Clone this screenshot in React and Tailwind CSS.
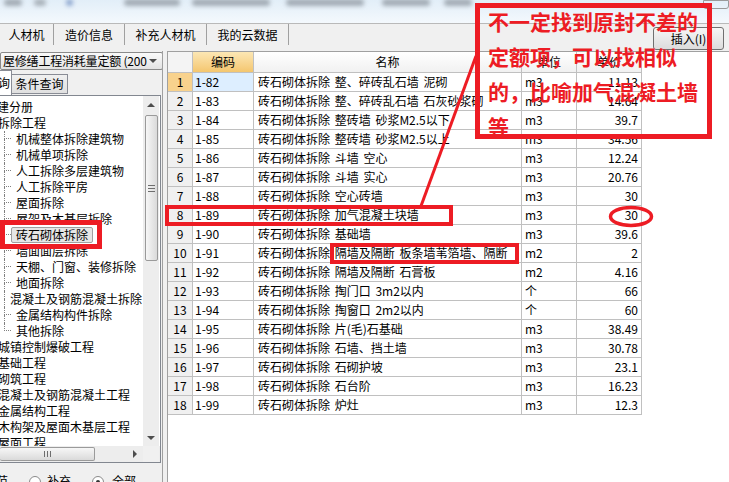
const rows = [
  ["1-82", "砖石砌体拆除 整、碎砖乱石墙 泥砌", "m3", "11.13"],
  ["1-83", "砖石砌体拆除 整、碎砖乱石墙 石灰砂浆砌", "m3", "14.64"],
  ["1-84", "砖石砌体拆除 整砖墙 砂浆M2.5以下", "m3", "39.7"],
  ["1-85", "砖石砌体拆除 整砖墙 砂浆M2.5以上", "m3", "34.56"],
  ["1-86", "砖石砌体拆除 斗墙 空心", "m3", "12.24"],
  ["1-87", "砖石砌体拆除 斗墙 实心", "m3", "20.76"],
  ["1-88", "砖石砌体拆除 空心砖墙", "m3", "30"],
  ["1-89", "砖石砌体拆除 加气混凝土块墙", "m3", "30"],
  ["1-90", "砖石砌体拆除 基础墙", "m3", "39.6"],
  ["1-91", "砖石砌体拆除 隔墙及隔断 板条墙苇箔墙、隔断", "m2", "2"],
  ["1-92", "砖石砌体拆除 隔墙及隔断 石膏板", "m2", "4.16"],
  ["1-93", "砖石砌体拆除 掏门口 3m2以内", "个", "66"],
  ["1-94", "砖石砌体拆除 掏窗口 2m2以内", "个", "60"],
  ["1-95", "砖石砌体拆除 片(毛)石基础", "m3", "38.49"],
  ["1-96", "砖石砌体拆除 石墙、挡土墙", "m3", "30.78"],
  ["1-97", "砖石砌体拆除 石砌护坡", "m3", "23.1"],
  ["1-98", "砖石砌体拆除 石台阶", "m3", "16.23"],
  ["1-99", "砖石砌体拆除 炉灶", "m3", "12.3"],
];

const children = [
  "机械整体拆除建筑物",
  "机械单项拆除",
  "人工拆除多层建筑物",
  "人工拆除平房",
  "屋面拆除",
  "屋架及木基层拆除",
  "砖石砌体拆除",
  "墙面面层拆除",
  "天棚、门窗、装修拆除",
  "地面拆除",
  "混凝土及钢筋混凝土拆除",
  "金属结构构件拆除",
  "其他拆除",
];

const lowerItems = [
  "城镇控制爆破工程",
  "基础工程",
  "砌筑工程",
  "混凝土及钢筋混凝土工程",
  "金属结构工程",
  "木构架及屋面木基层工程",
  "屋面工程",
];

const tabs = [
  ["人材机", "w-[54px]"],
  ["造价信息", "w-[71px]"],
  ["补充人材机", "w-[82px]"],
  ["我的云数据", "w-[82px]"],
];

function TreeChild({ label, last, selected }) {
  return (
    <div className="flex h-[16px] items-stretch">
      {/* dotted connector */}
      <div className="ml-[4px] w-[7px] flex flex-col">
        <div className="h-[8px] border-l border-b border-dotted border-[#808080]" />
        <div className={"h-[8px] border-dotted border-[#808080] " + (last ? "" : "border-l")} />
      </div>
      <div
        className={
          "px-[4px] leading-[14px] border rounded-[2px] whitespace-nowrap " +
          (selected ? "bg-[#e6e6e6] border-[#a0a0a0]" : "border-transparent")
        }
      >
        {label}
      </div>
    </div>
  );
}

function Arrow({ dir }) {
  const pts = {
    up: "0,4 4,0 8,4",
    down: "0,0 8,0 4,4",
    right: "0,0 4,4 0,8",
  }[dir];
  const size = dir === "right" ? "w-[4px] h-[8px]" : "w-[8px] h-[4px]";
  return (
    <svg viewBox={dir === "right" ? "0 0 4 8" : "0 0 8 4"} className={size}>
      <polygon points={pts} fill="#4d4d4d" />
    </svg>
  );
}

export default function App() {
  return (
    <div className="relative w-[729px] h-[482px] overflow-hidden bg-[#f0f0f0] text-[12px] text-black font-['Noto_Sans_CJK_SC',sans-serif]">
      {/* blurred toolbar strip */}
      <div className="h-[23px] bg-linear-to-b from-[#e2eef8] to-[#f4f9fd] flex items-start overflow-hidden">
        <span className="ml-[4px] w-[18px] h-[7px] -mt-[1px] bg-[#a3acb5] blur-[2px] rounded" />
        <span className="ml-[12px] w-[12px] h-[7px] -mt-[1px] bg-[#aab3bb] blur-[2px] rounded" />
        <span className="ml-[20px] w-[7px] h-[7px] -mt-[1px] bg-[#8fa8d0] blur-[2px] rounded" />
        <span className="ml-[51px] w-[56px] h-[7px] -mt-[1px] bg-[#a3acb5] blur-[2px] rounded" />
        <span className="ml-[12px] w-[78px] h-[7px] -mt-[1px] bg-[#a3acb5] blur-[2px] rounded" />
        <span className="ml-[16px] w-[78px] h-[7px] -mt-[1px] bg-[#a3acb5] blur-[2px] rounded" />
        <span className="ml-[18px] w-[48px] h-[7px] -mt-[1px] bg-[#a3acb5] blur-[2px] rounded" />
        <span className="ml-[14px] w-[28px] h-[7px] -mt-[1px] bg-[#a3acb5] blur-[2px] rounded" />
        <span className="ml-auto mr-[0px] w-[26px] h-[9px] border border-[#9a9a9a] rounded-b-[3px]" />
      </div>

      {/* tab row + insert button */}
      <div className="flex h-[28px] border-t border-[#b9b9b9]">
        <div className="flex h-[21px]">
          {tabs.map(([t, w]) => (
            <div key={t} className={w + " flex items-center justify-center border-r border-[#a0a0a0] whitespace-nowrap"}>
              {t}
            </div>
          ))}
        </div>
        <button className="ml-auto mt-[3px] mr-[5px] w-[71px] h-[23px] rounded-[3px] border border-[#707070] bg-linear-to-b from-[#f6f6f6] to-[#dcdcdc] flex items-center justify-center">
          插入(I)
        </button>
      </div>

      {/* main */}
      <div className="flex h-[431px]">
        {/* left panel */}
        <div className="w-[162px] flex flex-col">
          <div className="mt-[1px] h-[19px] w-[163px] border border-[#8a8a8a] rounded-[2px] bg-linear-to-b from-[#fafafa] to-[#e3e3e3] flex items-center pl-[2px] pr-[5px]">
            <span className="whitespace-nowrap leading-[16px] tracking-[-0.2px]">屋修缮工程消耗量定额 (200</span>
            <span className="ml-auto">
              <Arrow dir="down" />
            </span>
          </div>
          <div className="h-[26px] flex items-end">
            <div className="w-[12px] h-[25px] bg-white border-t border-r border-[#898c95] overflow-hidden flex items-center">
              <span className="-ml-[2px]">询</span>
            </div>
            <div className="w-[56px] h-[20px] mb-[1px] bg-linear-to-b from-[#f0f0f0] to-[#e0e0e0] border border-l-0 border-[#898c95] flex items-center justify-center">
              条件查询
            </div>
          </div>

          {/* tree box */}
          <div className="h-[368px] w-[161px] bg-white border border-l-0 border-[#828790] flex flex-col">
            <div className="flex flex-1 min-h-0">
              <div className="w-[143px] pt-[3px] overflow-hidden">
                <div className="h-[16px] leading-[16px] -ml-[3px] whitespace-nowrap">建分册</div>
                <div className="h-[16px] leading-[16px] -ml-[2px] whitespace-nowrap">拆除工程</div>
                {children.map((c, i) => (
                  <TreeChild key={c} label={c} last={i === children.length - 1} selected={c === "砖石砌体拆除"} />
                ))}
                {lowerItems.map((c) => (
                  <div key={c} className="h-[16px] leading-[16px] -ml-[2px] whitespace-nowrap">
                    {c}
                  </div>
                ))}
              </div>
              {/* vertical scrollbar */}
              <div className="w-[16px] bg-[#ededed] flex flex-col items-center">
                <div className="h-[17px] flex items-center justify-center">
                  <Arrow dir="up" />
                </div>
                <div className="mt-[2px] w-[13px] h-[146px] rounded-[2px] border border-[#9a9a9a] bg-linear-to-r from-[#f7f7f7] to-[#dadada] flex flex-col items-center justify-center gap-[2px]">
                  <span className="w-[7px] h-px bg-[#6e6e6e]" />
                  <span className="w-[7px] h-px bg-[#6e6e6e]" />
                  <span className="w-[7px] h-px bg-[#6e6e6e]" />
                </div>
                <div className="flex-1" />
                <div className="h-[17px] flex items-center justify-center">
                  <Arrow dir="down" />
                </div>
              </div>
            </div>
            {/* horizontal scrollbar */}
            <div className="h-[16px] flex bg-[#ededed]">
              <div className="w-[143px] flex items-center">
                <div className="w-[95px] h-[14px] rounded-[2px] border border-l-0 border-[#9a9a9a] bg-linear-to-b from-[#f7f7f7] to-[#dadada] flex items-center justify-center gap-[2px]">
                  <span className="w-px h-[6px] bg-[#6e6e6e]" />
                  <span className="w-px h-[6px] bg-[#6e6e6e]" />
                  <span className="w-px h-[6px] bg-[#6e6e6e]" />
                </div>
                <div className="ml-auto mr-[6px]">
                  <Arrow dir="right" />
                </div>
              </div>
              <div className="w-[16px] bg-[#f0f0f0]" />
            </div>
          </div>

          {/* radio row */}
          <div className="flex items-start pt-[10px] whitespace-nowrap leading-[16px]">
            <span className="-ml-[4px]">范</span>
            <span className="ml-[21px] mt-[3px] w-[12px] h-[12px] rounded-full border border-[#8a8a8a] bg-white" />
            <span className="ml-[6px]">补充</span>
            <span className="ml-[21px] mt-[3px] w-[12px] h-[12px] rounded-full border border-[#8a8a8a] bg-white flex items-center justify-center">
              <span className="w-[4px] h-[4px] rounded-full bg-[#333]" />
            </span>
            <span className="ml-[8px]">全部</span>
          </div>
        </div>

        <div className="w-[5px] border-l border-[#a0a0a0]" />

        {/* right panel: table */}
        <div className="flex-1 bg-white border-l border-t border-[#a0a0a0]">
          <div className="grid grid-cols-[25px_61px_268px_55px_65px] w-[474px] leading-[18px]">
            <div className="h-[21px] bg-[#f4f4f4] border-r border-b border-[#c0c0c0]" />
            <div className="h-[21px] bg-linear-to-b from-[#fce7b4] to-[#f4c66e] border-r border-b border-[#c0c0c0] flex items-center justify-center">编码</div>
            <div className="h-[21px] bg-linear-to-b from-white to-[#f1f1f1] border-r border-b border-[#c0c0c0] flex items-center justify-center">名称</div>
            <div className="h-[21px] bg-linear-to-b from-white to-[#f1f1f1] border-r border-b border-[#c0c0c0] flex items-center justify-center">单位</div>
            <div className="h-[21px] bg-linear-to-b from-white to-[#f1f1f1] border-r border-b border-[#c0c0c0] flex items-center justify-center">单价</div>

            {rows.map(([code, name, unit, price], i) => (
              <div key={code} className="contents">
                <div className={"h-[19px] border-r border-b border-[#c0c0c0] text-center " + (i === 0 ? "bg-[#f8d28d]" : "bg-[#f0f0f0]")}>
                  {i + 1}
                </div>
                <div className={"h-[19px] border-r border-b border-[#c0c0c0] pl-[2px] " + (i === 0 ? "bg-[#ddeeff]" : "")}>
                  {code}
                </div>
                <div className="h-[19px] border-r border-b border-[#c0c0c0] pl-[4px] whitespace-nowrap overflow-hidden [word-spacing:2px]">{name}</div>
                <div className="h-[19px] border-r border-b border-[#c0c0c0] pl-[3px]">{unit}</div>
                <div className="h-[19px] border-r border-b border-[#c0c0c0] pr-[3px] text-right">{price}</div>
              </div>
            ))}
          </div>
        </div>
      </div>

      {/* red annotations */}
      <svg className="absolute left-0 top-0 w-[729px] h-[482px] pointer-events-none" viewBox="0 0 729 482">
        <g fill="none" stroke="#ed1c24">
          <rect x="477.5" y="5.5" width="232" height="131" strokeWidth="5" />
          <line x1="476" y1="56" x2="421" y2="206" strokeWidth="3" />
          <rect x="167" y="207" width="284" height="17" strokeWidth="4" />
          <rect x="332" y="245" width="185" height="17" strokeWidth="4" />
          <rect x="2.5" y="222.5" width="97" height="24" strokeWidth="5" />
          <ellipse cx="631" cy="216.5" rx="20.5" ry="9" strokeWidth="3.5" />
        </g>
      </svg>
      <div className="absolute left-[488px] top-[4px] text-[21px] leading-[35px] font-bold text-[#ed1c24] whitespace-nowrap">
        <div>不一定找到原封不差的</div>
        <div>定额项，可以找相似</div>
        <div>的，比喻加气混凝土墙</div>
        <div>等</div>
      </div>
    </div>
  );
}
